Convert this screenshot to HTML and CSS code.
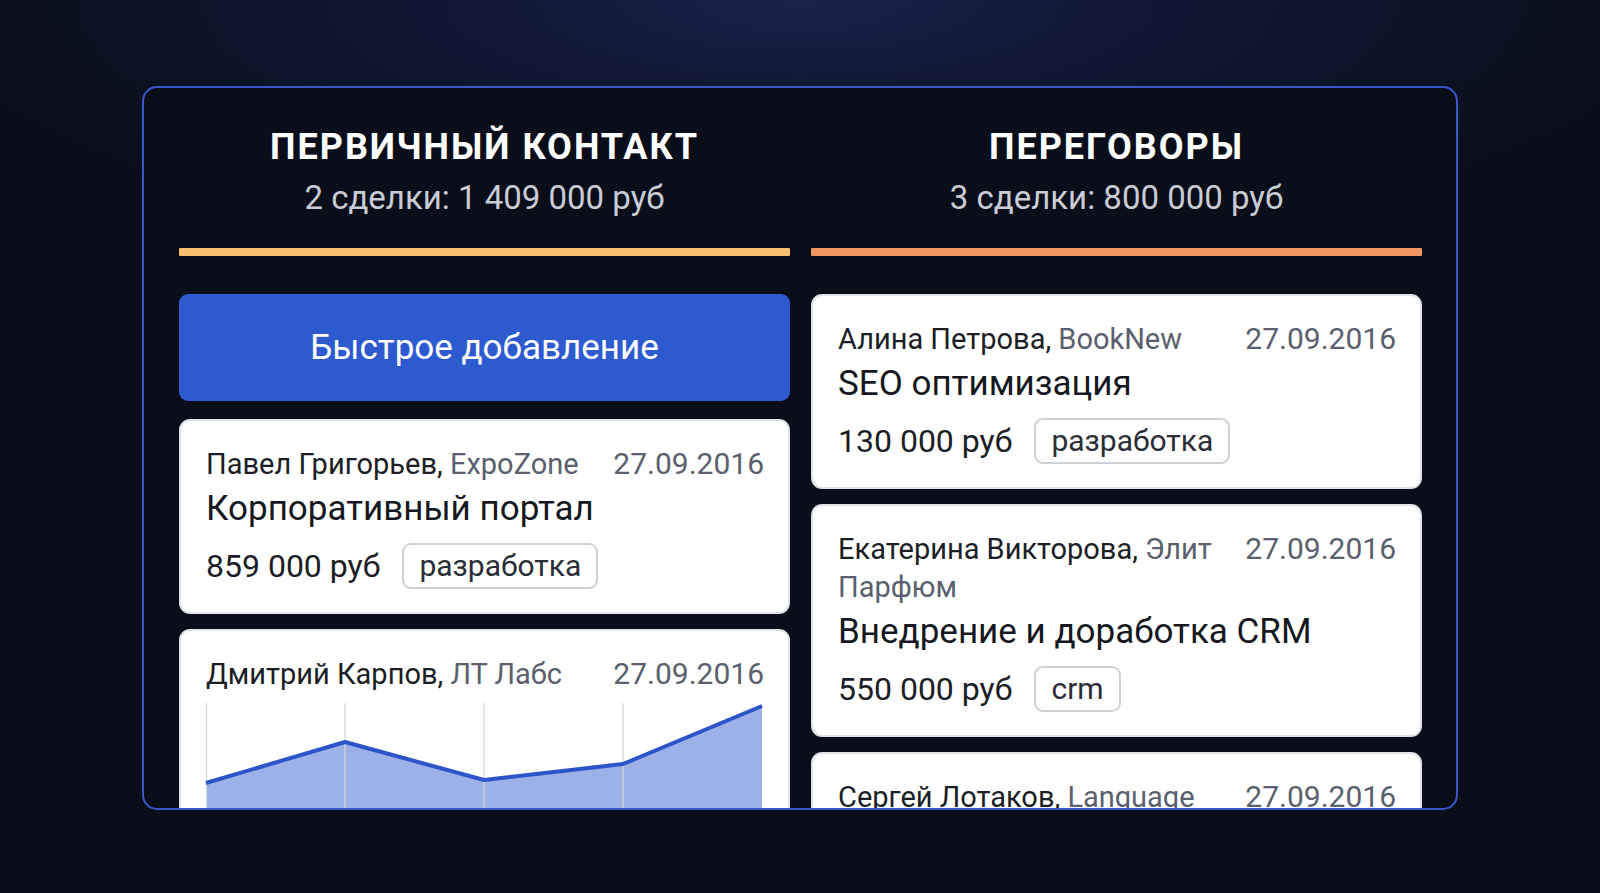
FILE: index.html
```html
<!DOCTYPE html>
<html lang="ru">
<head>
<meta charset="utf-8">
<title>Воронка продаж</title>
<link rel="stylesheet" href="styles.css">
</head>
<body>
<div class="frame">
  <div class="board">
    <section class="col">
      <header class="col-head">
        <h2 class="col-title">ПЕРВИЧНЫЙ КОНТАКТ</h2>
        <div class="col-sum">2 сделки: 1 409 000 руб</div>
        <div class="col-bar bar-yellow"></div>
      </header>
      <div class="list">
        <button class="quick-add">Быстрое добавление</button>
        <article class="card">
          <div class="card-head">
            <div class="who"><span class="person">Павел Григорьев,</span> <span class="company">ExpoZone</span></div>
            <div class="date">27.09.2016</div>
          </div>
          <div class="deal">Корпоративный портал</div>
          <div class="price-row">
            <span class="price">859 000 руб</span>
            <span class="tag">разработка</span>
          </div>
        </article>
        <article class="card">
          <div class="card-head">
            <div class="who"><span class="person">Дмитрий Карпов,</span> <span class="company">ЛТ Лабс</span></div>
            <div class="date">27.09.2016</div>
          </div>
          <svg class="chart" viewBox="0 0 556 140" width="556" height="140">
            <polygon class="chart-fill" points="0,80 139,39 278,77 417,61 556,3 556,140 0,140"/>
            <line class="grid" x1="0.5" y1="0" x2="0.5" y2="140"/>
            <line class="grid" x1="139" y1="0" x2="139" y2="140"/>
            <line class="grid" x1="278" y1="0" x2="278" y2="140"/>
            <line class="grid" x1="417" y1="0" x2="417" y2="140"/>
            <polyline class="chart-line" points="0,80 139,39 278,77 417,61 556,3"/>
          </svg>
        </article>
      </div>
    </section>
    <section class="col">
      <header class="col-head">
        <h2 class="col-title">ПЕРЕГОВОРЫ</h2>
        <div class="col-sum">3 сделки: 800 000 руб</div>
        <div class="col-bar bar-orange"></div>
      </header>
      <div class="list">
        <article class="card">
          <div class="card-head">
            <div class="who"><span class="person">Алина Петрова,</span> <span class="company">BookNew</span></div>
            <div class="date">27.09.2016</div>
          </div>
          <div class="deal">SEO оптимизация</div>
          <div class="price-row">
            <span class="price">130 000 руб</span>
            <span class="tag">разработка</span>
          </div>
        </article>
        <article class="card">
          <div class="card-head">
            <div class="who"><span class="person">Екатерина Викторова,</span> <span class="company">Элит Парфюм</span></div>
            <div class="date">27.09.2016</div>
          </div>
          <div class="deal">Внедрение и доработка CRM</div>
          <div class="price-row">
            <span class="price">550 000 руб</span>
            <span class="tag">crm</span>
          </div>
        </article>
        <article class="card">
          <div class="card-head">
            <div class="who"><span class="person">Сергей Лотаков,</span> <span class="company">Language</span></div>
            <div class="date">27.09.2016</div>
          </div>
        </article>
      </div>
    </section>
  </div>
</div>
</body>
</html>
```

FILE: styles.css
```css
* { box-sizing: border-box; }

html, body {
  margin: 0;
  padding: 0;
  height: 100%;
}

body {
  font-family: Roboto, "Liberation Sans", sans-serif;
  background-color: #0a0e1a;
  background-image: radial-gradient(ellipse 900px 260px at 50% 0%, #17214a 0%, #0f1630 45%, #0a0e1a 100%);
  overflow: hidden;
}

.frame {
  width: 1316px;
  height: 724px;
  margin: 86px auto 0;
  border: 2px solid #3458c6;
  border-radius: 15px;
  background: #0a0e1a;
  padding: 0 33px 0 35px;
  overflow: hidden;
}

.board {
  display: grid;
  grid-template-columns: 611px 611px;
  column-gap: 21px;
}

.col-head {
  padding-top: 37px;
  text-align: center;
}

.col-title {
  margin: 0;
  font-size: 36px;
  line-height: 44px;
  font-weight: 700;
  letter-spacing: 2px;
  color: #ffffff;
}

.col-sum {
  margin-top: 7px;
  font-size: 33px;
  line-height: 44px;
  color: #c9ccd5;
}

.col-bar {
  margin-top: 28px;
  height: 8px;
  border-radius: 1px;
}

.bar-yellow { background: #f8bf6f; }
.bar-orange { background: #f09561; }

.list {
  margin-top: 38px;
  display: flex;
  flex-direction: column;
  gap: 15px;
}

.quick-add {
  height: 107px;
  margin-bottom: 3px;
  border: none;
  border-radius: 9px;
  background: #2d5bcf;
  color: #ffffff;
  font-family: Roboto, "Liberation Sans", sans-serif;
  font-size: 35px;
  text-align: center;
}

.card {
  background: #ffffff;
  border: 2px solid #dfe2e8;
  border-radius: 11px;
  padding: 24px 24px 23px 25px;
  flex: none;
}

.card-head {
  display: flex;
  justify-content: space-between;
  align-items: flex-start;
  gap: 14px;
  font-size: 29px;
  line-height: 38px;
}

.who { flex: 1 1 auto; }

.person { color: #1b1e25; }
.company { color: #5a606d; }

.date {
  flex: none;
  font-size: 30px;
  color: #5a606d;
}

.deal {
  margin-top: 4px;
  font-size: 35px;
  line-height: 44px;
  color: #15181e;
}

.price-row {
  margin-top: 12px;
  display: flex;
  align-items: center;
  gap: 22px;
  height: 46px;
}

.price {
  font-size: 32px;
  color: #1b1e25;
}

.tag {
  height: 46px;
  padding: 0 15px;
  border: 2px solid #cdd1d8;
  border-radius: 9px;
  font-size: 30px;
  line-height: 42px;
  color: #2a2e37;
}

.chart {
  display: block;
  margin-top: 10px;
  overflow: visible;
}

.chart-fill { fill: #9cb1e8; }
.grid { stroke: #d3d6dd; stroke-width: 1.2; }
.chart-line {
  fill: none;
  stroke: #2b55c9;
  stroke-width: 4;
  stroke-linejoin: round;
}
```
